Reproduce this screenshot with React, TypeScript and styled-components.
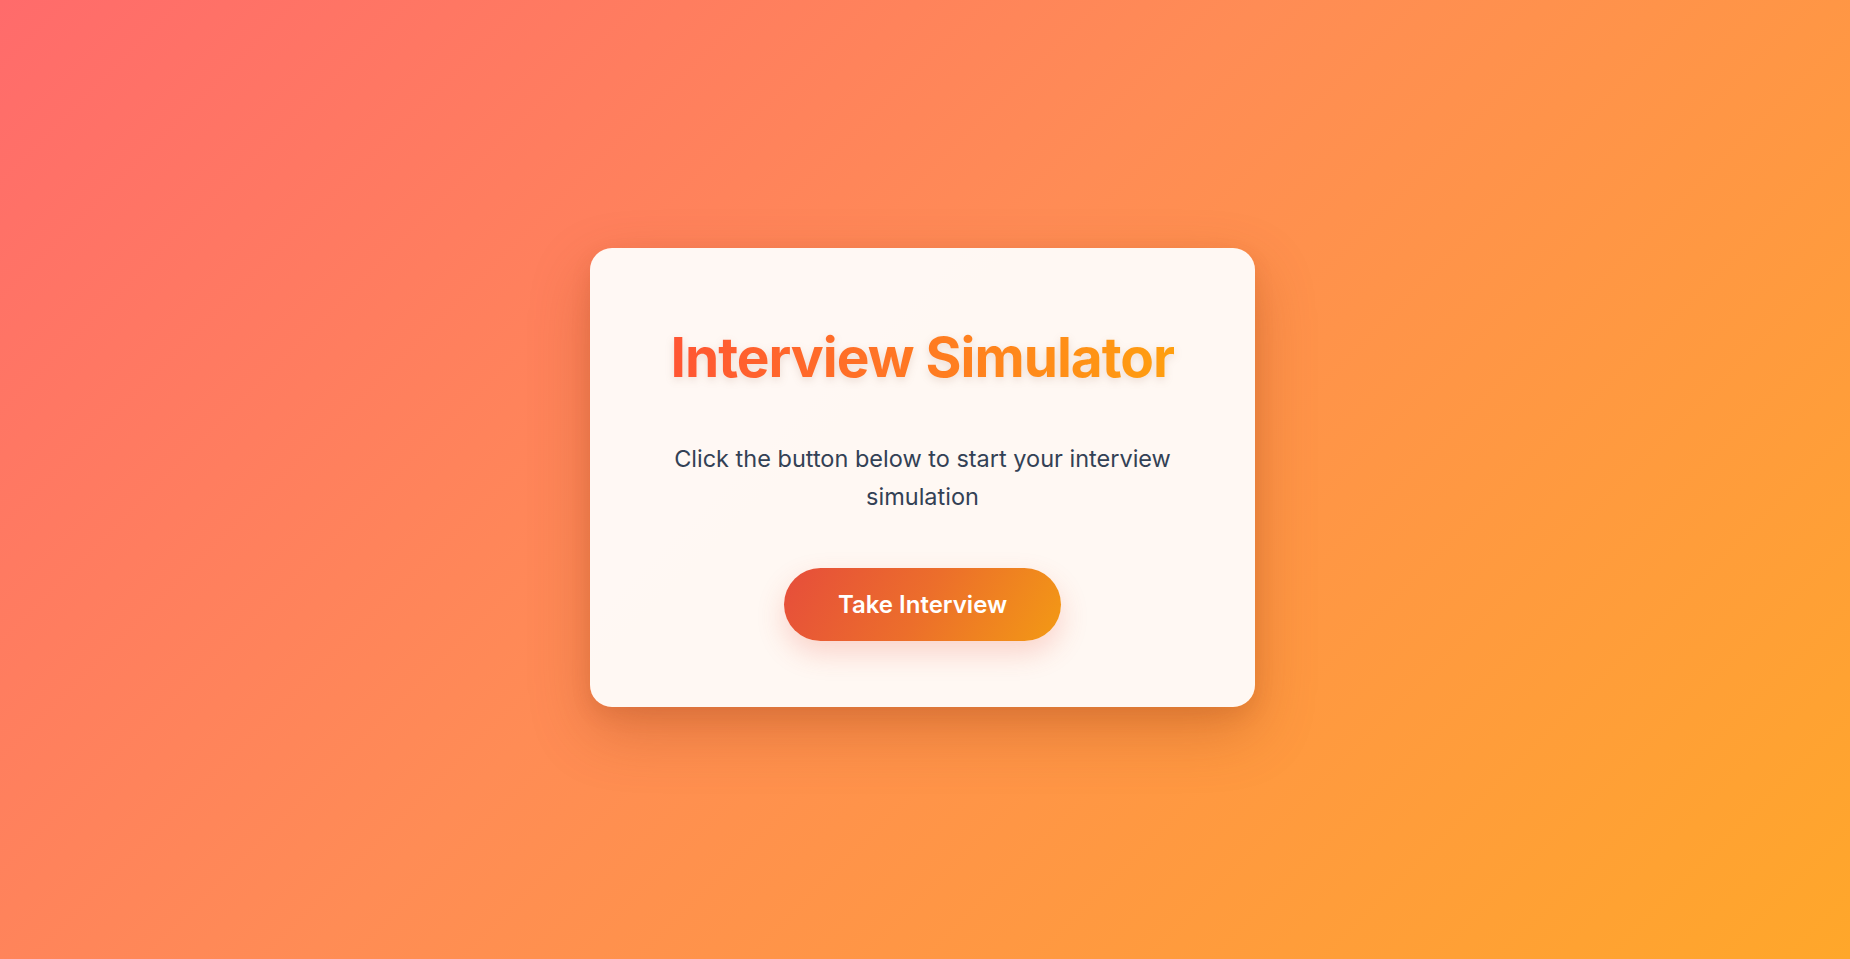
import React from "react";
import styled, { createGlobalStyle } from "styled-components";

const Global = createGlobalStyle`
  html, body { margin: 0; padding: 0; }
  body { font-family: Inter, "Noto Sans", sans-serif; }
  * { box-sizing: border-box; }
`;

const Page = styled.div`
  width: 100%;
  min-height: 959px;
  display: flex;
  align-items: center;
  justify-content: center;
  background: linear-gradient(135deg, #ff6b6b 0%, #ff8c55 45%, #ffa72a 100%);
`;

const Card = styled.div`
  width: 665px;
  margin: 0 5px 4px 0;
  padding: 75px 72px 66px;
  border-radius: 22px;
  background: rgba(255, 250, 247, 0.98);
  box-shadow: 0 24px 60px rgba(150, 60, 20, 0.3), 0 8px 20px rgba(150, 60, 20, 0.12);
  display: flex;
  flex-direction: column;
  align-items: center;
  text-align: center;
`;

const Title = styled.h1`
  margin: 0 0 49px;
  font-family: Inter, sans-serif;
  font-size: 55px;
  font-weight: 700;
  line-height: 68px;
  letter-spacing: -1px;
  white-space: nowrap;
  background: linear-gradient(90deg, #ff5533 0%, #ff7a22 50%, #ff9f0f 100%);
  -webkit-background-clip: text;
  background-clip: text;
  color: transparent;
  filter: drop-shadow(0 3px 4px rgba(120, 60, 30, 0.14));
`;

const Subtitle = styled.p`
  margin: 0 0 52px;
  font-family: Inter, sans-serif;
  font-size: 23.5px;
  line-height: 38px;
  color: #334155;
  font-weight: 400;
`;

const Button = styled.button`
  border: none;
  height: 73px;
  padding: 0 54px;
  border-radius: 999px;
  font-family: Inter, sans-serif;
  font-size: 24px;
  font-weight: 600;
  color: #fff;
  background: linear-gradient(120deg, #e64d3b 0%, #ec6e2b 50%, #f39a14 100%);
  box-shadow: 0 12px 28px rgba(230, 80, 60, 0.22);
  cursor: pointer;
`;

export default function App() {
  return (
    <>
      <Global />
      <Page>
        <Card>
          <Title>Interview Simulator</Title>
          <Subtitle>Click the button below to start your interview simulation</Subtitle>
          <Button>Take Interview</Button>
        </Card>
      </Page>
    </>
  );
}
